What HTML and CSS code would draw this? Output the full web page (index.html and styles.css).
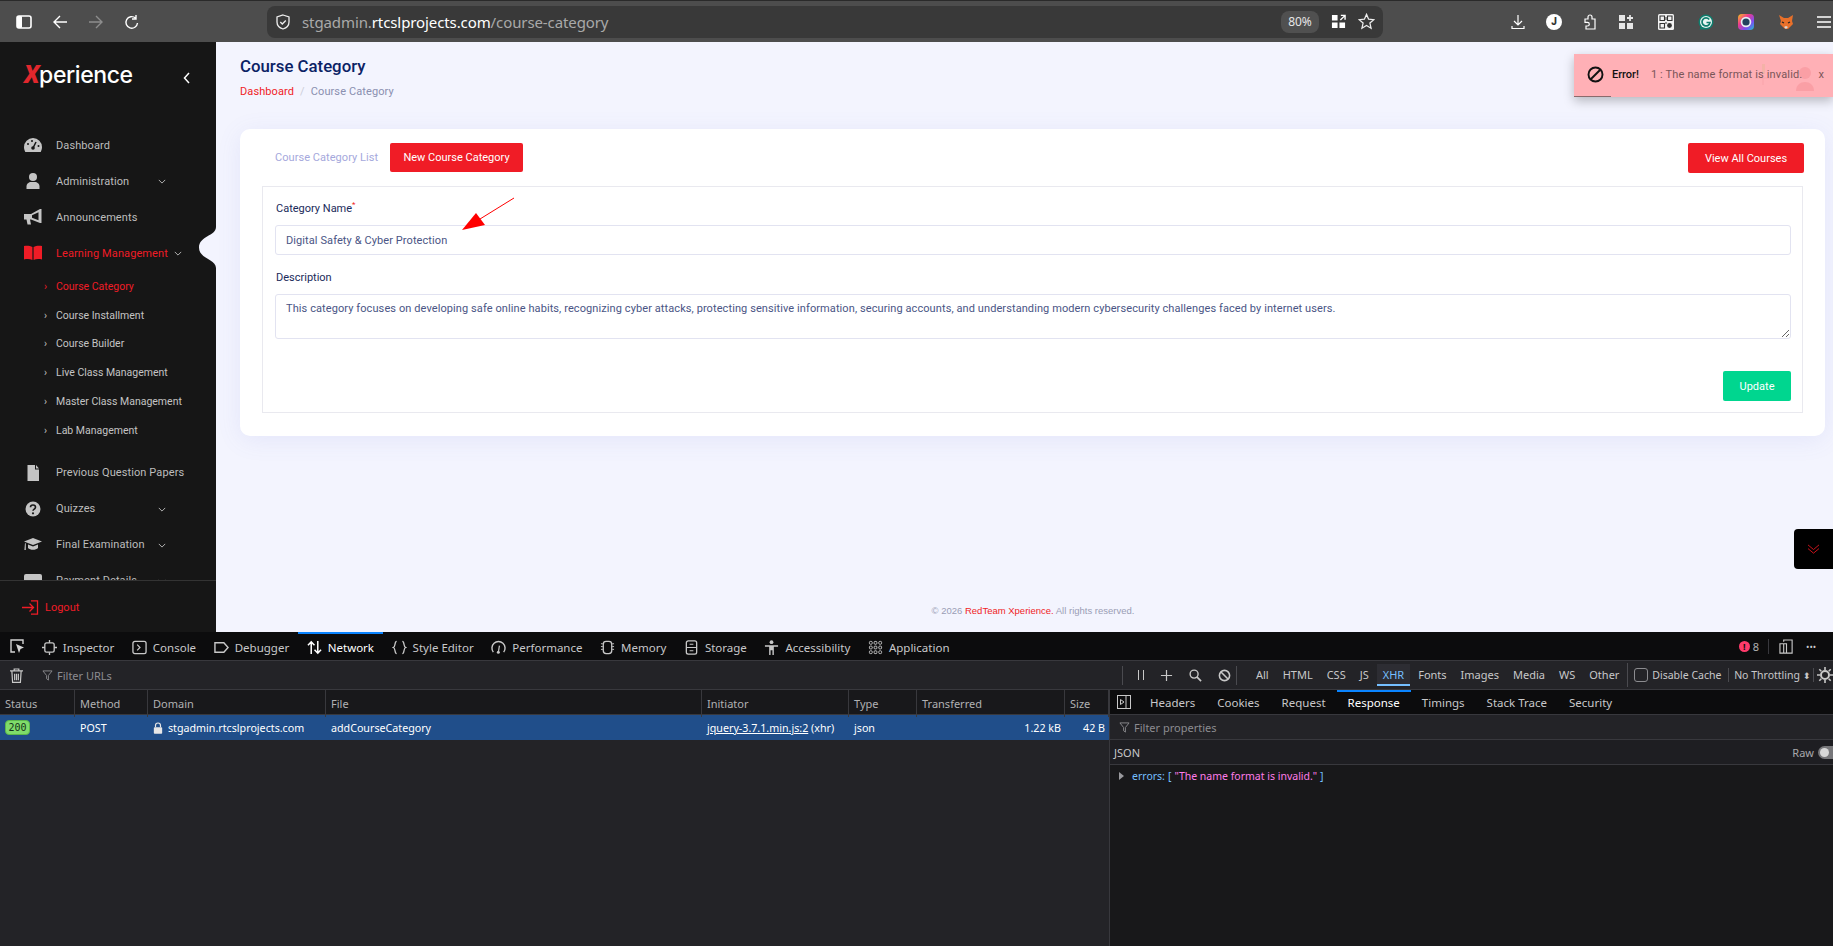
FILE: index.html
```html
<!DOCTYPE html>
<html lang="en">
<head>
    <meta charset="UTF-8">
    <title>Course Category</title>
    <link rel="stylesheet" href="styles.css">
</head>
<body>
    <!-- Browser toolbar -->
    <div class="browser-bar">
        <div class="nav-btns">
            <svg class="ico" viewBox="0 0 16 16"><rect x="1" y="2" width="14" height="12" rx="2" fill="none" stroke="#fff" stroke-width="1.6"/><rect x="1" y="2" width="5" height="12" rx="1" fill="#fff"/></svg>
            <svg class="ico" viewBox="0 0 16 16"><path d="M15 8H2M8 2L2 8l6 6" fill="none" stroke="#fff" stroke-width="1.4"/></svg>
            <svg class="ico" viewBox="0 0 16 16"><path d="M1 8h13M8 2l6 6-6 6" fill="none" stroke="#8d8d8d" stroke-width="1.4"/></svg>
            <svg class="ico" viewBox="0 0 16 16"><path d="M13.5 9a5.8 5.8 0 1 1-2-5M12 1v4H8" fill="none" stroke="#fff" stroke-width="1.4"/></svg>
        </div>
        <div class="url-bar">
            <svg class="shield" viewBox="0 0 16 16"><path d="M8 1l6 2v5c0 3.500-2.800 6-6 7-3.200-1-6-3.500-6-7V3z" fill="none" stroke="#eee" stroke-width="1.300"/><path d="M5.300 8l2 2 3.500-3.500" fill="none" stroke="#eee" stroke-width="1.300"/></svg>
            <span class="url">stgadmin.<b>rtcslprojects.com</b>/course-category</span>
            <span class="zoom-pill">80%</span>
            <svg class="ico-sm" viewBox="0 0 16 16"><path d="M1 1h6v6H1zM1 9h6v6H1zM9 9h6v6H9z" fill="#fff"/><path d="M10 6.500L14.500 2M10.500 1.500h4.500V6" fill="none" stroke="#fff" stroke-width="1.500"/></svg>
            <svg class="ico-star" viewBox="0 0 16 16"><path d="M8 1.300l2 4.500 4.900.5-3.700 3.200 1.100 4.800L8 11.800l-4.300 2.500 1.100-4.800L1.100 6.300 6 5.800z" fill="none" stroke="#eee" stroke-width="1.200"/></svg>
        </div>
        <div class="ext-icons">
            <svg class="ico ext-tight" viewBox="0 0 16 16"><path d="M8 1v9.500M4 7l4 4 4-4M2 12v2.500h12V12" fill="none" stroke="#fff" stroke-width="1.200"/></svg>
            <span class="ext-j ext-tight">J</span>
            <svg class="ico ext-tight" viewBox="0 0 16 16"><path d="M3 5h3V3a2 2 0 0 1 4 0v2h3v10H4v-3h1.500a1.800 1.800 0 0 0 0-3.600H3z" fill="none" stroke="#fff" stroke-width="1.200"/></svg>
            <svg class="ico" viewBox="0 0 16 16"><path d="M1 1h6v6H1zM1 9h6v6H1zM9 9h6v6H9z" fill="#e6e6e6"/><path d="M12 1v6M9 4h6" stroke="#e6e6e6" stroke-width="1.800"/></svg>
            <svg class="ico-qr" viewBox="0 0 16 16"><rect width="16" height="16" rx="1.500" fill="#f2f2f2"/><path d="M2 2h4.500v4.500H2zM9.500 2H14v4.500H9.500zM2 9.500h4.500V14H2z" fill="none" stroke="#333" stroke-width="1.100"/><circle cx="11.500" cy="11.500" r="2.400" fill="#333"/><path d="M7.500 3h1v3h-1zM7.500 8h1v2h-1z" fill="#333"/></svg>
            <svg class="ico-qr" viewBox="0 0 16 16"><path d="M8 .5a7.500 7.500 0 0 1 0 15H1.500L2.500 13A7.500 7.500 0 0 1 8 .5z" fill="#0f7d6d"/><circle cx="8" cy="8" r="6" fill="#e9f5f2"/><path d="M11.200 5.500A4 4 0 1 0 12 8.500H8.500" fill="none" stroke="#0f7d6d" stroke-width="1.700"/></svg>
            <svg class="ico-qr" viewBox="0 0 16 16"><defs><linearGradient id="rb" x1="0" y1="0" x2="1" y2="1"><stop offset="0" stop-color="#f5c518"/><stop offset=".35" stop-color="#ef3a8c"/><stop offset=".7" stop-color="#7b4df3"/><stop offset="1" stop-color="#19c9c9"/></linearGradient></defs><rect width="16" height="16" rx="4" fill="url(#rb)"/><circle cx="8" cy="8" r="5.300" fill="#e8eef4"/><circle cx="8" cy="8" r="3.600" fill="#23415f"/></svg>
            <svg class="ico-qr" viewBox="0 0 16 16"><path d="M1 1l5 3h4l5-3-1 6 1 3-3 3-2 2H7l-2-2-3-3 1-3z" fill="#e8702a"/><path d="M6 13l2-1 2 1-2 2z" fill="#d9d9d9"/><path d="M4 8l2 1M12 8l-2 1" stroke="#222" stroke-width="1.200"/></svg>
            <svg class="ico ext-menu" viewBox="0 0 16 16"><path d="M1 3h14M1 8h14M1 13h14" stroke="#fff" stroke-width="1.300"/></svg>
        </div>
    </div>

    <div class="app">
        <aside class="sidebar">
            <div class="logo-row">
                <div class="logo"><span class="logo-x">X</span>perience</div>
                <svg class="collapse" viewBox="0 0 8 12"><path d="M6 1L1.500 6 6 11" fill="none" stroke="#fff" stroke-width="1.500"/></svg>
            </div>
            <nav class="side-nav">
                <a class="nav-row" href="#">
                    <svg class="nav-ico" viewBox="0 0 18 14"><path d="M9 0a9 9 0 0 0-9 9c0 1.800.5 3.500 1.300 5h15.400c.8-1.500 1.300-3.200 1.300-5a9 9 0 0 0-9-9z" fill="#c4c4c4"/><path d="M9 10L12 4" stroke="#161616" stroke-width="1.500"/><circle cx="9" cy="10" r="1.800" fill="#161616"/><circle cx="4" cy="6" r="1" fill="#161616"/><circle cx="8" cy="3" r="1" fill="#161616"/><circle cx="14.500" cy="8" r="1" fill="#161616"/></svg>
                    <span>Dashboard</span>
                </a>
                <a class="nav-row" href="#">
                    <svg class="nav-ico" viewBox="0 0 18 16"><circle cx="9" cy="4" r="4" fill="#c4c4c4"/><path d="M2.500 16v-2.500C2.500 10.500 5 9 7 9h4c2 0 4.500 1.500 4.500 4.500V16z" fill="#c4c4c4"/></svg>
                    <span>Administration</span>
                    <svg class="caret" viewBox="0 0 10 6"><path d="M1 1l4 4 4-4" fill="none" stroke="#c4c4c4" stroke-width="1.100"/></svg>
                </a>
                <a class="nav-row" href="#">
                    <svg class="nav-ico" viewBox="0 0 18 16"><path d="M0 5h7l9-5h1.500v14H16L7 10.500H6L7 15.500H3.500L2.500 10.500H0z" fill="#c4c4c4"/><path d="M14.500 3.200L8 6.200v2.500l6.500 2.600z" fill="#161616"/></svg>
                    <span>Announcements</span>
                </a>
                <a class="nav-row active" href="#">
                    <svg class="nav-ico" viewBox="0 0 18 14"><path d="M0 0c3-.6 6-.4 8.400 1V14C6 12.800 3 12.800 0 13.500zM18 0c-3-.6-6-.4-8.400 1V14c2.400-1.200 5.400-1.200 8.400-.5z" fill="#f01c26"/></svg>
                    <span>Learning Management</span>
                    <svg class="caret caret-near" viewBox="0 0 10 6"><path d="M1 1l4 4 4-4" fill="none" stroke="#c4c4c4" stroke-width="1.100"/></svg>
                </a>
                <div class="sub-nav">
                    <a class="sub-row active" href="#">Course Category</a>
                    <a class="sub-row" href="#">Course Installment</a>
                    <a class="sub-row" href="#">Course Builder</a>
                    <a class="sub-row" href="#">Live Class Management</a>
                    <a class="sub-row" href="#">Master Class Management</a>
                    <a class="sub-row" href="#">Lab Management</a>
                </div>
                <a class="nav-row" href="#">
                    <svg class="nav-ico" viewBox="0 0 18 16"><path d="M3.500 0h7.500v4.500h4V16H3.500zM12 0l3 3.500h-3z" fill="#c4c4c4"/></svg>
                    <span>Previous Question Papers</span>
                </a>
                <a class="nav-row" href="#">
                    <svg class="nav-ico" viewBox="0 0 18 16"><circle cx="9" cy="8" r="7.500" fill="#c4c4c4"/><path d="M6.500 6.300c0-3 5-3 5 0 0 1.800-2.500 1.700-2.500 3.500" fill="none" stroke="#161616" stroke-width="1.600"/><circle cx="9" cy="12.300" r="1.100" fill="#161616"/></svg>
                    <span>Quizzes</span>
                    <svg class="caret" viewBox="0 0 10 6"><path d="M1 1l4 4 4-4" fill="none" stroke="#c4c4c4" stroke-width="1.100"/></svg>
                </a>
                <a class="nav-row" href="#">
                    <svg class="nav-ico" viewBox="0 0 18 14"><path d="M9 0L18 3.500 9 7 0 3.500z" fill="#c4c4c4"/><path d="M4 6.500L9 8.500l5-2V10c-2 2.400-8 2.400-10 0zM1 5l.8.400V12H.4z" fill="#c4c4c4"/></svg>
                    <span>Final Examination</span>
                    <svg class="caret" viewBox="0 0 10 6"><path d="M1 1l4 4 4-4" fill="none" stroke="#c4c4c4" stroke-width="1.100"/></svg>
                </a>
                <a class="nav-row" href="#">
                    <svg class="nav-ico" viewBox="0 0 18 14"><rect width="18" height="14" rx="2" fill="#c4c4c4"/></svg>
                    <span>Payment Details</span>
                    <svg class="caret" viewBox="0 0 10 6"><path d="M1 1l4 4 4-4" fill="none" stroke="#c4c4c4" stroke-width="1.100"/></svg>
                </a>
            </nav>
            <a class="logout" href="#">
                <svg class="logout-ico" viewBox="0 0 17 15"><path d="M0 7.500h11M7.500 3.500l4 4-4 4M9 .8h6.500v13.400H9" fill="none" stroke="#f01c26" stroke-width="1.300"/></svg>
                Logout
            </a>
        </aside>
        <svg class="notch" viewBox="0 0 17 41"><path d="M17 0C17 9 0 9 0 20.500 0 32 17 32 17 41z" fill="#f3f4fe"/></svg>

        <main class="content">
            <h1 class="page-title">Course Category</h1>
            <div class="breadcrumb"><a href="#">Dashboard</a><span class="sep">/</span><span>Course Category</span></div>

            <section class="card">
                <div class="card-top">
                    <a class="tab-link" href="#">Course Category List</a>
                    <button class="btn-red">New Course Category</button>
                    <button class="btn-red btn-all">View All Courses</button>
                </div>
                <form class="form-box">
                    <label class="form-label">Category Name<sup>*</sup></label>
                    <input class="form-input" type="text" value="Digital Safety &amp; Cyber Protection">
                    <label class="form-label label-desc">Description</label>
                    <textarea class="form-text">This category focuses on developing safe online habits, recognizing cyber attacks, protecting sensitive information, securing accounts, and understanding modern cybersecurity challenges faced by internet users.</textarea>
                    <div class="form-foot"><button class="btn-green" type="button">Update</button></div>
                </form>
            </section>

            <footer class="page-foot">© 2026 <span>RedTeam Xperience.</span> All rights reserved.</footer>
        </main>

        <!-- Annotation arrow drawn on the screenshot -->
        <svg class="note-arrow" viewBox="0 0 60 40"><path d="M56 2L22 23" stroke="#f00" stroke-width="1"/><path d="M4 34L18 17l9 12z" fill="#f00"/></svg>

        <div class="toast">
            <svg class="toast-ghost" viewBox="0 0 72 36"><path d="M9 6h3v10H9z" fill="#e8b49a"/><path d="M2 20h16M10 20v7" stroke="#f59aa0" stroke-width="1"/><circle cx="52" cy="15" r="6" fill="#f78f96"/><path d="M43 33c0-12 18-12 18 0z" fill="#f78f96"/></svg>
            <svg class="toast-ico" viewBox="0 0 16 16"><circle cx="8" cy="8" r="6.600" fill="none" stroke="#111" stroke-width="1.800"/><path d="M3.500 12.500l9-9" stroke="#111" stroke-width="1.800"/></svg>
            <b>Error!</b>
            <span class="toast-msg">1 : The name format is invalid.</span>
            <span class="toast-x">x</span>
            <div class="toast-bar"></div>
        </div>

        <div class="scroll-btn">
            <svg viewBox="0 0 14 12"><path d="M1 1l6 5 6-5M1 5l6 5 6-5" fill="none" stroke="#d8141c" stroke-width="1"/></svg>
        </div>
    </div>

    <!-- Firefox devtools -->
    <div class="devtools">
        <div class="dt-tabs">
            <svg class="dt-pick" viewBox="0 0 16 16"><path d="M6 14H2V2h12v4" fill="none" stroke="#d4d4d4" stroke-width="1.400"/><path d="M7 6l8 3.500-3.500 1.500L10 15z" fill="#d4d4d4"/></svg>
            <span class="dt-tab"><svg viewBox="0 0 16 16"><rect x="3" y="3" width="10" height="10" rx="2" fill="none" stroke="#c8c8c8" stroke-width="1.400"/><path d="M8 0v3M8 13v3M0 8h3M13 8h3" stroke="#c8c8c8" stroke-width="1.400"/></svg>Inspector</span>
            <span class="dt-tab"><svg viewBox="0 0 16 16"><rect x="1" y="1.500" width="14" height="13" rx="2" fill="none" stroke="#c8c8c8" stroke-width="1.400"/><path d="M5.500 5l3 3-3 3" fill="none" stroke="#c8c8c8" stroke-width="1.300"/></svg>Console</span>
            <span class="dt-tab"><svg viewBox="0 0 16 16"><path d="M1 3h9.500L15 8l-4.500 5H1z" fill="none" stroke="#c8c8c8" stroke-width="1.500"/></svg>Debugger</span>
            <span class="dt-tab on"><svg viewBox="0 0 16 16"><path d="M4.500 15V2M1 5.500L4.500 2 8 5.500M11.500 1v13M8 10.500l3.500 3.500 3.500-3.500" fill="none" stroke="#fff" stroke-width="1.600"/></svg>Network</span>
            <span class="dt-tab"><svg viewBox="0 0 16 16"><path d="M5 1.500C2.500 1.500 4 7 1.500 8 4 9 2.500 14.500 5 14.500M11 1.500c2.500 0 1 5.500 3.500 6.500-2.500 1-1 6.500-3.500 6.500" fill="none" stroke="#c8c8c8" stroke-width="1.400"/></svg>Style Editor</span>
            <span class="dt-tab"><svg viewBox="0 0 16 16"><path d="M2.500 13A7 7 0 1 1 13.500 13" fill="none" stroke="#c8c8c8" stroke-width="1.500"/><path d="M8 12l1-6" stroke="#c8c8c8" stroke-width="1.300"/><circle cx="7.800" cy="13" r="1.600" fill="#c8c8c8"/></svg>Performance</span>
            <span class="dt-tab"><svg viewBox="0 0 16 16"><rect x="3.500" y="1.500" width="9" height="13" rx="3" fill="none" stroke="#c8c8c8" stroke-width="1.400"/><path d="M1 4h2M1 7h2M1 10h2M13 4h2M13 7h2M13 10h2" stroke="#c8c8c8"/></svg>Memory</span>
            <span class="dt-tab"><svg viewBox="0 0 16 16"><rect x="2.500" y="1" width="11" height="14" rx="2" fill="none" stroke="#c8c8c8" stroke-width="1.400"/><path d="M3 8h10M6 4.500h4M6 11.500h4" stroke="#c8c8c8" stroke-width="1.200"/></svg>Storage</span>
            <span class="dt-tab"><svg viewBox="0 0 16 16"><circle cx="8" cy="2.300" r="2" fill="#c8c8c8"/><path d="M1 5.500h14v1.800h-4.500V16H9V11H7v5H5.500V7.300H1z" fill="#c8c8c8"/></svg>Accessibility</span>
            <span class="dt-tab"><svg viewBox="0 0 16 16"><g fill="none" stroke="#c8c8c8"><rect x="1.500" y="1.500" width="3" height="3" rx="1"/><rect x="6.500" y="1.500" width="3" height="3" rx="1"/><rect x="11.500" y="1.500" width="3" height="3" rx="1"/><rect x="1.500" y="6.500" width="3" height="3" rx="1"/><rect x="6.500" y="6.500" width="3" height="3" rx="1"/><rect x="11.500" y="6.500" width="3" height="3" rx="1"/><rect x="1.500" y="11.500" width="3" height="3" rx="1"/><rect x="6.500" y="11.500" width="3" height="3" rx="1"/><rect x="11.500" y="11.500" width="3" height="3" rx="1"/></g></svg>Application</span>
            <div class="dt-right">
                <span class="dt-err"><i>!</i>8</span>
                <svg class="dt-resp" viewBox="0 0 16 16"><path d="M5 3V1h9v14H5V5M1 5h7v10H1z" fill="none" stroke="#c8c8c8" stroke-width="1.200"/></svg>
                <span class="dt-dots">•••</span>
            </div>
        </div>

        <div class="dt-tools">
            <div class="dt-filter">
                <svg class="dt-trash" viewBox="0 0 14 16"><path d="M0 3h14M4.500 3V1h5v2M2 3l.8 12.500h8.400L12 3M5 6v7M7 6v7M9 6v7" fill="none" stroke="#c8c8c8" stroke-width="1.300"/></svg>
                <svg class="dt-funnel" viewBox="0 0 12 12"><path d="M1 1h10L7 6v5l-2-1.500V6z" fill="none" stroke="#8c8c90"/></svg>
                <span>Filter URLs</span>
            </div>
            <div class="dt-actions">
                <span class="dt-pause"></span>
                <svg class="dt-act" viewBox="0 0 14 14"><path d="M7 1v12M1 7h12" stroke="#c8c8c8" stroke-width="1.300"/></svg>
                <svg class="dt-act" viewBox="0 0 14 14"><circle cx="5.500" cy="5.500" r="4.300" fill="none" stroke="#c8c8c8" stroke-width="1.500"/><path d="M8.500 8.500L13 13" stroke="#c8c8c8" stroke-width="1.800"/></svg>
                <svg class="dt-act" viewBox="0 0 14 14"><circle cx="7" cy="7" r="5.500" fill="none" stroke="#c8c8c8" stroke-width="1.700"/><path d="M3 3l8 8" stroke="#c8c8c8" stroke-width="1.700"/></svg>
            </div>
            <div class="dt-types">
                <span>All</span><span>HTML</span><span>CSS</span><span>JS</span><span class="on">XHR</span><span>Fonts</span><span>Images</span><span>Media</span><span>WS</span><span>Other</span>
            </div>
            <div class="dt-cache"><i></i>Disable Cache</div>
            <div class="dt-throttle">No Throttling<em>⬍</em></div>
            <svg class="dt-gear" viewBox="0 0 16 16"><circle cx="8" cy="8" r="4" fill="none" stroke="#c8c8c8" stroke-width="2"/><path d="M8 0v3M8 13v3M0 8h3M13 8h3M2.300 2.300l2 2M11.700 11.700l2 2M2.300 13.700l2-2M11.700 4.300l2-2" stroke="#c8c8c8" stroke-width="1.600"/></svg>
        </div>

        <div class="dt-body">
            <div class="req-panel">
                <div class="req-grid req-head">
                    <span>Status</span><span>Method</span><span>Domain</span><span>File</span><span>Initiator</span><span>Type</span><span>Transferred</span><span>Size</span>
                </div>
                <div class="req-grid req-row">
                    <span><b class="status-ok">200</b></span>
                    <span>POST</span>
                    <span class="req-domain"><svg viewBox="0 0 12 14"><path d="M3 6V4a3 3 0 0 1 6 0v2" fill="none" stroke="#e6e6e6" stroke-width="1.400"/><rect x="1" y="6" width="10" height="8" rx="1" fill="#e6e6e6"/></svg>stgadmin.rtcslprojects.com</span>
                    <span>addCourseCategory</span>
                    <span><u>jquery-3.7.1.min.js:2</u> (xhr)</span>
                    <span>json</span>
                    <span class="num">1.22 kB</span>
                    <span class="num">42 B</span>
                </div>
            </div>
            <div class="resp-panel">
                <div class="resp-tabs">
                    <svg class="resp-toggle" viewBox="0 0 14 14"><rect x=".5" y=".5" width="13" height="13" fill="none" stroke="#c8c8c8"/><path d="M9 1v12" stroke="#c8c8c8"/><path d="M3.500 4.500L7 7l-3.500 2.500z" fill="none" stroke="#c8c8c8"/></svg>
                    <span>Headers</span><span>Cookies</span><span>Request</span><span class="on">Response</span><span>Timings</span><span>Stack Trace</span><span>Security</span>
                </div>
                <div class="resp-filter">
                    <svg class="dt-funnel" viewBox="0 0 12 12"><path d="M1 1h10L7 6v5l-2-1.500V6z" fill="none" stroke="#8c8c90"/></svg>
                    Filter properties
                </div>
                <div class="resp-json"><span>JSON</span><span class="raw">Raw<i></i></span></div>
                <div class="resp-tree"><em></em><span class="k">errors:</span> <span class="k">[</span> <span class="v">"The name format is invalid."</span> <span class="k">]</span></div>
            </div>
        </div>
    </div>
</body>
</html>
```

FILE: styles.css
```css
* {
    box-sizing: border-box;
}

html, body {
    height: 100%;
}

body {
    margin: 0;
    overflow: hidden;
    display: flex;
    flex-direction: column;
    font-family: Roboto, sans-serif;
    background-color: #18181a;
}

a {
    text-decoration: none;
}

svg {
    flex-shrink: 0;
    display: block;
}

/* Browser toolbar */
.browser-bar {
    height: 42px;
    flex-shrink: 0;
    display: flex;
    align-items: center;
    background-color: #4d4d4d;
    border-top: 1px solid #2a2a2a;
    padding-left: 16px;
    color: #fff;
}

.nav-btns {
    display: flex;
    gap: 20px;
    width: 251px;
}

.ico {
    width: 16px;
    height: 16px;
}

.url-bar {
    width: 1116px;
    height: 32px;
    display: flex;
    align-items: center;
    background-color: #393939;
    border-radius: 8px;
    padding: 0 8px;
    font-family: "Noto Sans", sans-serif;
}

.shield {
    width: 16px;
    height: 16px;
}

.url {
    margin-left: 11px;
    font-size: 15px;
    letter-spacing: -0.1px;
    color: #a9a9a9;
    flex-grow: 1;
}

.url b {
    font-weight: 400;
    color: #fff;
}

.zoom-pill {
    width: 38px;
    height: 22px;
    line-height: 22px;
    text-align: center;
    background-color: #505050;
    border-radius: 8px;
    font-size: 12px;
    color: #e6e6e6;
}

.ico-sm {
    width: 15px;
    height: 15px;
    margin-left: 12px;
}

.ico-star {
    width: 17px;
    height: 17px;
    margin-left: 12px;
}

.ext-icons {
    display: flex;
    align-items: center;
    gap: 24px;
    margin-left: 127px;
}

.ext-tight {
    margin-right: -4px;
}

.ext-menu {
    margin-left: -2px;
}

.ext-j {
    width: 16px;
    height: 16px;
    border-radius: 50%;
    background-color: #fff;
    color: #333;
    font-size: 10px;
    font-weight: 900;
    line-height: 16px;
    text-align: center;
}

.ico-qr {
    width: 16px;
    height: 16px;
}

/* Page area */
.app {
    position: relative;
    height: 590px;
    flex-shrink: 0;
    display: flex;
    background-color: #f3f4fe;
    overflow: hidden;
}

.sidebar {
    width: 216px;
    flex-shrink: 0;
    display: flex;
    flex-direction: column;
    background-color: #161616;
}

.logo-row {
    height: 85px;
    flex-shrink: 0;
    display: flex;
    align-items: flex-start;
    padding: 19px 0 0 24px;
}

.logo {
    width: 161px;
    font-family: Inter, sans-serif;
    font-size: 23px;
    line-height: 28px;
    font-weight: 500;
    letter-spacing: -0.4px;
    color: #fff;
}

.logo-x {
    font-family: Roboto, sans-serif;
    font-style: italic;
    font-weight: 900;
    font-size: 25px;
    color: #e1272d;
}

.collapse {
    width: 8px;
    height: 12px;
    margin: 11px 0 0 -2px;
}

.side-nav {
    flex-grow: 1;
    min-height: 0;
    overflow: hidden;
}

.nav-row {
    height: 36px;
    display: flex;
    align-items: center;
    padding-left: 24px;
    font-size: 11px;
    letter-spacing: 0.1px;
    color: #bdbdbd;
    position: relative;
}

.nav-ico {
    width: 18px;
    height: 16px;
    margin-right: 14px;
}

.caret {
    position: absolute;
    left: 158px;
    top: 16px;
    width: 8px;
    height: 5px;
}

.caret-near {
    left: 174px;
}

.nav-row.active {
    color: #f01c26;
}

.sub-nav {
    padding: 1px 0 10.2px;
}

.sub-row {
    height: 28.8px;
    display: flex;
    align-items: center;
    padding-left: 56px;
    position: relative;
    font-size: 10.5px;
    color: #c4c4c4;
}

.sub-row::before {
    content: "›";
    position: absolute;
    left: 44px;
    font-size: 10px;
}

.sub-row.active {
    color: #f01c26;
}

.logout {
    height: 52px;
    flex-shrink: 0;
    display: flex;
    align-items: center;
    gap: 6px;
    padding: 2px 0 0 22px;
    border-top: 1px solid #333;
    font-size: 11px;
    color: #f01c26;
}

.logout-ico {
    width: 17px;
    height: 15px;
}

.notch {
    position: absolute;
    left: 199px;
    top: 185px;
    width: 17px;
    height: 41px;
}

.content {
    flex-grow: 1;
    min-width: 0;
    display: flex;
    flex-direction: column;
    padding: 14px 8px 0 24px;
}

.page-title {
    margin: 0;
    font-size: 16.8px;
    line-height: 20px;
    font-weight: 500;
    color: #0b2265;
}

.breadcrumb {
    margin-top: 9px;
    height: 14px;
    line-height: 14px;
    font-size: 11px;
    letter-spacing: 0.1px;
    color: #8a8fb0;
}

.breadcrumb a {
    color: #f01c26;
}

.sep {
    margin: 0 6px;
    color: #ccced9;
}

.card {
    margin-top: 30px;
    background-color: #fff;
    border-radius: 10px;
    padding: 14px 22px 23px;
    box-shadow: 0 4px 24px rgba(100, 110, 220, 0.1);
}

.card-top {
    height: 29px;
    display: flex;
    align-items: flex-start;
    margin-bottom: 14px;
}

.tab-link {
    width: 128px;
    padding-left: 13px;
    line-height: 29px;
    font-size: 11px;
    letter-spacing: 0.05px;
    color: #a5a8dc;
}

.btn-red {
    height: 29px;
    width: 133px;
    border: none;
    border-radius: 2px;
    background-color: #f01c26;
    color: #fff;
    font-family: Roboto, sans-serif;
    font-size: 11px;
}

.btn-all {
    height: 30px;
    width: 116px;
    margin-left: auto;
    margin-right: -1px;
}

.form-box {
    display: flex;
    flex-direction: column;
    border: 1px solid #e9e9ef;
    padding: 14px 11px 11px 12px;
}

.form-label {
    line-height: 16px;
    margin-bottom: 8px;
    padding-left: 1px;
    font-size: 11px;
    color: #1a2a5a;
}

.form-label sup {
    color: #f01c26;
    font-size: 8px;
    line-height: 0;
}

.label-desc {
    margin-top: 15px;
}

.form-input, .form-text {
    width: 100%;
    border: 1px solid #e2e3f1;
    border-radius: 3px;
    padding: 0 10px;
    font-family: Roboto, sans-serif;
    font-size: 11px;
    letter-spacing: 0.09px;
    color: #4a5585;
    background-color: #fff;
    outline: none;
}

.form-input {
    height: 30px;
}

.form-text {
    height: 45px;
    padding-top: 7px;
    line-height: 14px;
    display: block;
}

.form-foot {
    margin-top: 32px;
    display: flex;
    justify-content: flex-end;
}

.btn-green {
    width: 68px;
    height: 30px;
    border: none;
    border-radius: 2px;
    background-color: #00d68f;
    color: #fff;
    font-family: Roboto, sans-serif;
    font-size: 11px;
}

.page-foot {
    margin-top: auto;
    padding: 0 0 16px 1px;
    text-align: center;
    font-family: "Liberation Sans", sans-serif;
    font-size: 9.5px;
    color: #9a9db5;
}

.page-foot span {
    color: #f01c26;
}

.note-arrow {
    position: absolute;
    left: 458px;
    top: 154px;
    width: 60px;
    height: 40px;
}

.toast {
    position: absolute;
    top: 12px;
    right: 0;
    width: 259px;
    height: 43px;
    display: flex;
    align-items: center;
    padding: 0 0 3px 13px;
    background-color: #ffb0b6;
    font-size: 11px;
    color: #111;
    box-shadow: 0 4px 10px rgba(0, 0, 0, 0.25);
}

.toast-ico {
    width: 17px;
    height: 17px;
    margin-right: 8px;
}

.toast b {
    font-weight: 500;
}

.toast-msg {
    position: relative;
    margin-left: 12px;
    color: #7a5558;
    letter-spacing: 0.15px;
}

.toast-x {
    margin-left: 16px;
    color: #7a5558;
}

.toast-ghost {
    position: absolute;
    left: 179px;
    top: 4px;
    width: 72px;
    height: 36px;
    opacity: 0.5;
}

.toast-bar {
    position: absolute;
    left: 0;
    bottom: 0;
    width: 37px;
    height: 1px;
    background-color: #8a6a6c;
}

.scroll-btn {
    position: absolute;
    right: 0;
    top: 487px;
    width: 39px;
    height: 40px;
    display: flex;
    align-items: center;
    justify-content: center;
    background-color: #000;
    border-radius: 4px 0 0 4px;
}

.scroll-btn svg {
    width: 13px;
    height: 11px;
}

/* Firefox devtools */
.devtools {
    flex-grow: 1;
    min-height: 0;
    display: flex;
    flex-direction: column;
    background-color: #232327;
    font-family: "Noto Sans", sans-serif;
    font-size: 11.5px;
    color: #c8c8ca;
}

.dt-tabs {
    height: 29px;
    flex-shrink: 0;
    display: flex;
    align-items: center;
    background-color: #0c0c0d;
    border-bottom: 1px solid #38383d;
}

.dt-pick {
    width: 16px;
    height: 16px;
    margin: 0 8px 0 9px;
}

.dt-tab {
    height: 100%;
    display: flex;
    align-items: center;
    gap: 6px;
    padding: 0 8.8px;
    border-top: 2px solid transparent;
}

.dt-tab svg {
    width: 15px;
    height: 15px;
}

.dt-tab.on {
    color: #fff;
    border-top-color: #0a84ff;
}

.dt-right {
    margin-left: auto;
    display: flex;
    align-items: center;
}

.dt-err {
    display: flex;
    align-items: center;
    gap: 3px;
    font-size: 11px;
    color: #b1b1b3;
    padding-right: 9px;
    border-right: 1px solid #38383d;
}

.dt-err i {
    width: 11px;
    height: 11px;
    border-radius: 50%;
    background-color: #ff3b6b;
    color: #0c0c0d;
    font-size: 9px;
    font-style: normal;
    font-weight: 700;
    line-height: 11px;
    text-align: center;
}

.dt-resp {
    width: 15px;
    height: 15px;
    margin: 0 12px 0 10px;
}

.dt-dots {
    font-size: 9px;
    width: 27px;
}

.dt-tools {
    height: 29px;
    flex-shrink: 0;
    display: flex;
    align-items: center;
    border-bottom: 1px solid #38383d;
    position: relative;
}

.dt-filter {
    width: 1124px;
    display: flex;
    align-items: center;
    color: #8c8c90;
    font-size: 11px;
}

.dt-trash {
    width: 13px;
    height: 15px;
    margin: 0 19px 0 10px;
}

.dt-funnel {
    width: 11px;
    height: 11px;
    margin-right: 4px;
}

.dt-actions {
    width: 115px;
    height: 19px;
    display: flex;
    align-items: center;
    gap: 16px;
    padding-left: 15px;
    border-left: 1px solid #4a4a4f;
    border-right: 1px solid #4a4a4f;
}

.dt-pause {
    width: 6px;
    height: 10px;
    border-left: 1px solid #c8c8c8;
    border-right: 1px solid #c8c8c8;
}

.dt-act {
    width: 13px;
    height: 13px;
}

.dt-types {
    width: 392px;
    height: 24px;
    display: flex;
    align-items: center;
    gap: 2px;
    padding-left: 13px;
    font-size: 11px;
    color: #c8c8ca;
    border-right: 1px solid #4a4a4f;
}

.dt-types span {
    padding: 0 6px;
    line-height: 22px;
}

.dt-types .on {
    color: #75bfff;
    background-color: #2d2d33;
    box-shadow: inset 0 -2px 0 #75bfff;
}

.dt-cache {
    display: flex;
    align-items: center;
    gap: 4px;
    width: 101px;
    padding-left: 6px;
    font-size: 10.5px;
    white-space: nowrap;
    border-right: 1px solid #4a4a4f;
}

.dt-cache i {
    width: 14px;
    height: 14px;
    flex-shrink: 0;
    border: 1px solid #8c8c90;
    border-radius: 3px;
}

.dt-throttle {
    width: 85px;
    padding-left: 5px;
    font-size: 10.5px;
    white-space: nowrap;
    border-right: 1px solid #4a4a4f;
}

.dt-throttle em {
    font-style: normal;
    font-size: 9px;
    margin-left: 3px;
}

.dt-gear {
    width: 16px;
    height: 16px;
    margin-left: 3px;
}

.dt-body {
    flex-grow: 1;
    min-height: 0;
    display: flex;
}

.req-panel {
    width: 1109px;
    flex-shrink: 0;
}

.req-grid {
    display: grid;
    grid-template-columns: 75px 73px 178px 376px 147px 68px 148px 44px;
    align-items: center;
}

.req-head {
    height: 25px;
    background-color: #18181b;
    border-bottom: 1px solid #38383d;
    font-size: 11px;
    color: #b1b1b3;
}

.req-head span {
    height: 100%;
    line-height: 27px;
    padding-left: 5px;
    border-right: 1px solid #38383d;
}

.req-row {
    height: 25px;
    background-color: #204e8a;
    font-size: 10.7px;
    color: #fff;
}

.req-row span {
    padding-left: 5px;
    white-space: nowrap;
}

.req-row .num {
    text-align: right;
    padding-right: 4px;
}

.status-ok {
    display: inline-block;
    width: 25px;
    height: 15px;
    line-height: 14px;
    text-align: center;
    background-color: #7fdc6a;
    border: 1px solid #5bb84a;
    border-radius: 4px;
    color: #14321a;
    font-family: "DejaVu Sans Mono", monospace;
    font-size: 10px;
    font-weight: 400;
}

.req-domain {
    display: flex;
    align-items: center;
    gap: 5px;
}

.req-domain svg {
    width: 10px;
    height: 12px;
}

.resp-panel {
    flex-grow: 1;
    min-width: 0;
    background-color: #18181a;
    border-left: 1px solid #38383d;
}

.resp-tabs {
    height: 25px;
    display: flex;
    align-items: center;
    background-color: #0c0c0d;
    border-bottom: 1px solid #38383d;
    font-size: 11.5px;
}

.resp-toggle {
    width: 14px;
    height: 14px;
    margin: 0 8px 0 7px;
}

.resp-tabs span {
    height: 100%;
    padding: 0 11px;
    line-height: 21px;
    border-top: 2px solid transparent;
}

.resp-tabs .on {
    color: #fff;
    border-top-color: #0a84ff;
}

.resp-filter {
    height: 25px;
    display: flex;
    align-items: center;
    padding-left: 9px;
    background-color: #232327;
    border-bottom: 1px solid #38383d;
    font-size: 11px;
    color: #8c8c90;
}

.resp-json {
    height: 25px;
    display: flex;
    align-items: center;
    justify-content: space-between;
    padding-left: 4px;
    background-color: #1e1e22;
    border-bottom: 1px solid #38383d;
    font-size: 11px;
}

.raw {
    display: flex;
    align-items: center;
    gap: 4px;
    margin-right: -9px;
    color: #a8a8ab;
}

.raw i {
    width: 24px;
    height: 13px;
    border-radius: 7px;
    background-color: #77777a;
    position: relative;
}

.raw i::before {
    content: "";
    position: absolute;
    left: 2px;
    top: 2px;
    width: 9px;
    height: 9px;
    border-radius: 50%;
    background-color: #d8d8d8;
}

.resp-tree {
    padding: 4px 0 0 9px;
    font-size: 10.5px;
    display: flex;
    align-items: center;
    gap: 3px;
}

.resp-tree em {
    width: 0;
    height: 0;
    border-left: 5px solid #9a9a9e;
    border-top: 4px solid transparent;
    border-bottom: 4px solid transparent;
    margin-right: 5px;
}

.k {
    color: #75bfff;
}

.v {
    color: #ff7de9;
}
```
